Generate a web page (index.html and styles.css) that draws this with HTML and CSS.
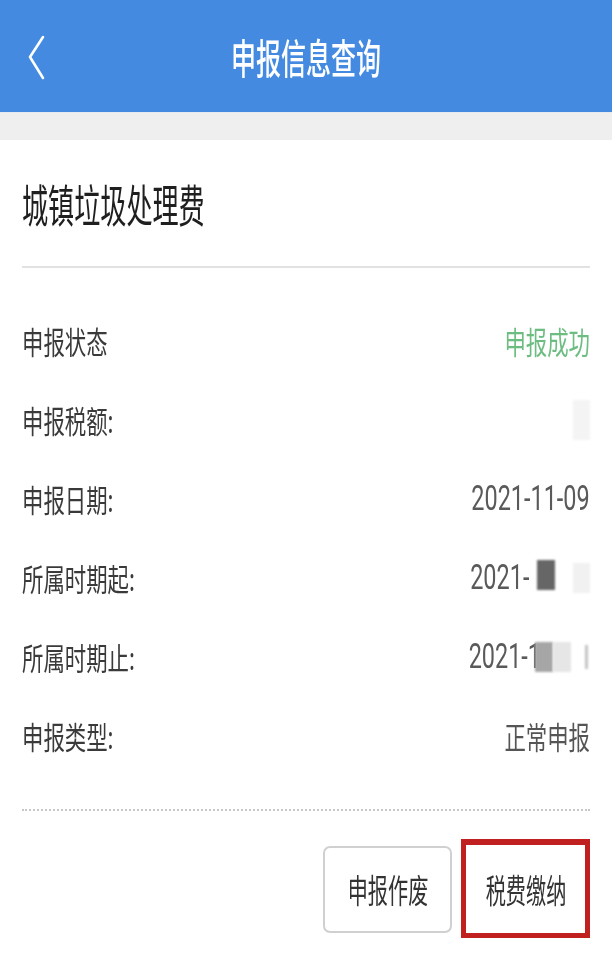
FILE: index.html
```html
<!DOCTYPE html>
<html lang="zh-CN">
<head>
  <meta charset="UTF-8"/>
  <meta name="viewport" content="width=device-width,initial-scale=1.0"/>
  <title>申报信息查询</title>
  <link rel="stylesheet" href="styles.css">
</head>
<body>
  <div class="topbar">
    <div class="back">
      <svg width="20" height="46" viewBox="0 0 20 46">
        <polyline points="16,2 3,22 16,43" fill="none" stroke="#fff" stroke-width="2.6" stroke-linecap="round" stroke-linejoin="round"/>
      </svg>
    </div>
    <h1 class="title"><span class="sq">申报信息查询</span></h1>
    <div></div>
  </div>
  <div class="spacer"></div>

  <div class="card">
    <div class="card-head">
      <h2 class="tax-name"><span class="sq">城镇垃圾处理费</span></h2>
    </div>

    <div class="rows">
      <div class="row">
        <span class="label sq">申报状态</span>
        <span class="value ok sq-r">申报成功</span>
      </div>
      <div class="row">
        <span class="label sq">申报税额:</span>
        <span class="value">
          <i class="blot faint"></i>
        </span>
      </div>
      <div class="row">
        <span class="label sq">申报日期:</span>
        <span class="value num sq-r">2021-11-09</span>
      </div>
      <div class="row">
        <span class="label sq">所属时期起:</span>
        <span class="value">
          <span class="num sq-r">2021-</span>
          <i class="blot dark"></i>
          <i class="blot gap"></i>
          <i class="blot pale"></i>
        </span>
      </div>
      <div class="row">
        <span class="label sq">所属时期止:</span>
        <span class="value">
          <span class="num sq-r">2021-1</span>
          <i class="blot mid"></i>
          <i class="blot pale2"></i>
          <i class="blot gap2"></i>
          <i class="blot thin"></i>
        </span>
      </div>
      <div class="row">
        <span class="label sq">申报类型:</span>
        <span class="value sq-r">正常申报</span>
      </div>
    </div>

    <div class="actions">
      <button class="btn"><span class="sq-c">申报作废</span></button>
      <button class="btn marked"><span class="sq-c">税费缴纳</span></button>
    </div>
  </div>
</body>
</html>
```

FILE: styles.css
```css
* { box-sizing: border-box; }
body {
  margin: 0;
  background: #fff;
  font-family: "Noto Sans CJK SC", "Noto Sans", sans-serif;
  color: #333;
}
.sq, .sq-r, .sq-c { display: inline-block; line-height: 1; white-space: nowrap; }
.sq { transform-origin: left center; }
.sq-r { transform-origin: right center; }
.sq-c { transform-origin: center center; }

/* top bar */
.topbar {
  height: 112px;
  background: #448ae0;
  display: grid;
  grid-template-columns: 1fr auto 1fr;
  align-items: center;
}
.back { padding-left: 27px; display: flex; align-items: center; padding-top: 3px; }
.title {
  margin: 0;
  color: #fff;
  font-size: 41px;
  font-weight: 500;
  display: flex;
  justify-content: center;
}
.title .sq { transform: scaleX(.61); transform-origin: center center; margin: 0 -80px; }
.spacer { height: 28px; background: #efefef; border-top: 1px solid #e6ebf2; }

/* card */
.card { padding: 0 22px; }
.card-head {
  height: 128px;
  display: flex;
  align-items: center;
  border-bottom: 2px solid #e2e2e2;
}
.tax-name {
  margin: 0;
  font-size: 45px;
  font-weight: 400;
  color: #1f1f1f;
}
.tax-name .sq { transform: scaleX(.58); }

.rows {
  padding: 33px 0 34px;
  border-bottom: 2px dotted #c8c8c8;
}
.row {
  height: 79px;
  display: flex;
  align-items: center;
  justify-content: space-between;
}
.label { font-size: 31px; color: #3a3a3a; transform: scaleX(.69); }
.value {
  display: flex;
  align-items: center;
  font-size: 31px;
  color: #555;
}
.value.sq-r { display: inline-block; transform: scaleX(.69); }
.value.ok { color: #6dbd82; }
.num {
  font-family: Roboto, "Liberation Sans", sans-serif;
  font-size: 35px;
  color: #5a5a5a;
  transform: scaleX(.67);
}
.value.num { transform: scaleX(.67); }

/* blurred parts */
.blot { display: block; height: 30px; filter: blur(1px); }
.blot.faint { width: 17px; height: 40px; background: #f4f4f4; }
.blot.dark { width: 18px; background: #666; margin-left: 8px; height: 30px; margin-top: -6px; }
.blot.gap { width: 18px; }
.blot.pale { width: 17px; background: #f1f1f1; }
.blot.mid { width: 18px; background: #a6a6a6; margin-left: -6px; position: relative; }
.blot.pale2 { width: 18px; background: #e6e6e6; }
.blot.gap2 { width: 14px; }
.blot.thin { width: 3px; height: 24px; background: #c4c4c4; margin-right: 2px; }

/* buttons */
.actions {
  display: flex;
  justify-content: flex-end;
  align-items: center;
  gap: 9px;
  padding-top: 30px;
}
.btn {
  width: 129px;
  height: 87px;
  background: #fff;
  border: 2px solid #d0d0d0;
  border-radius: 7px;
  font-family: "Noto Sans CJK SC", sans-serif;
  font-size: 33px;
  color: #333;
  padding: 0;
  display: flex;
  align-items: center;
  justify-content: center;
}
.btn .sq-c { transform: scaleX(.61); margin: 0 -30px; }
.btn.marked {
  height: 99px;
  border: 5px solid #c0201f;
  border-top-width: 6px;
  border-radius: 0;
  margin-top: -2px;
}
```
